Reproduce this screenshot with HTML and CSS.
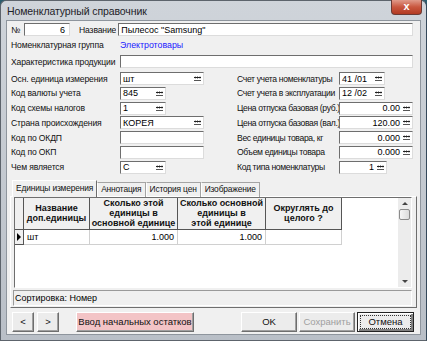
FILE: index.html
```html
<!DOCTYPE html>
<html lang="ru">
<head>
    <meta charset="UTF-8">
    <title>Номенклатурный справочник</title>
    <link rel="stylesheet" href="styles.css">
</head>
<body>
<div class="window">
    <div class="titlebar">
        <span class="title">Номенклатурный справочник</span>
        <span class="close">x</span>
    </div>

    <div class="client">
        <!-- шапка -->
        <div class="row r-first">
            <span class="lbl lbl-num">№</span>
            <span class="field f-num num">6</span>
            <span class="lbl lbl-name">Название</span>
            <span class="field grow">Пылесос "Samsung"</span>
        </div>
        <div class="row r-group">
            <span class="lbl lbl-wide">Номенклатурная группа</span>
            <span class="link">Электротовары</span>
        </div>
        <div class="row r-char">
            <span class="lbl lbl-wide">Характеристика продукции</span>
            <span class="field grow"></span>
        </div>

        <!-- две колонки реквизитов -->
        <div class="cols">
            <div class="col col-left">
                <div class="row"><span class="lbl">Осн. единица измерения</span><span class="field w83">шт<i class="dots"></i></span></div>
                <div class="row"><span class="lbl">Код валюты учета</span><span class="field w45">845<i class="dots"></i></span></div>
                <div class="row"><span class="lbl">Код схемы налогов</span><span class="field w45">1<i class="dots"></i></span></div>
                <div class="row"><span class="lbl">Страна происхождения</span><span class="field w83">КОРЕЯ<i class="dots"></i></span></div>
                <div class="row"><span class="lbl">Код по ОКДП</span><span class="field w83"></span></div>
                <div class="row"><span class="lbl">Код по ОКП</span><span class="field w83"></span></div>
                <div class="row"><span class="lbl">Чем является</span><span class="field w45">С<i class="dots"></i></span></div>
            </div>
            <div class="col col-right">
                <div class="row"><span class="lbl">Счет учета номенклатуры</span><span class="field w45">41 /01<i class="dots"></i></span></div>
                <div class="row"><span class="lbl">Счет учета в эксплуатации</span><span class="field w45">12 /02<i class="dots"></i></span></div>
                <div class="row"><span class="lbl">Цена отпуска базовая (руб.)</span><span class="field w74 num">0.00<i class="dots"></i></span></div>
                <div class="row"><span class="lbl">Цена отпуска базовая (вал.)</span><span class="field w74 num">120.00<i class="dots"></i></span></div>
                <div class="row"><span class="lbl">Вес единицы товара, кг</span><span class="field w74 num">0.000<i class="dots"></i></span></div>
                <div class="row"><span class="lbl">Объем единицы товара</span><span class="field w74 num">0.000<i class="dots"></i></span></div>
                <div class="row"><span class="lbl">Код типа номенклатуры</span><span class="field w48 num">1<i class="dots"></i></span></div>
            </div>
        </div>

        <!-- закладки -->
        <div class="tabs">
            <span class="tab active">Единицы измерения</span>
            <span class="tab">Аннотация</span>
            <span class="tab">История цен</span>
            <span class="tab">Изображение</span>
        </div>
        <div class="panel">
            <div class="grid">
                <table>
                    <tr class="head">
                        <th class="ind"></th>
                        <th class="c1">Название<br>доп.единицы</th>
                        <th class="c2">Сколько этой<br>единицы в<br>основной единице</th>
                        <th class="c3">Сколько основной<br>единицы в<br>этой единице</th>
                        <th class="c4">Округлять до<br>целого ?</th>
                    </tr>
                    <tr class="data">
                        <td class="ind"><i class="arrow"></i></td>
                        <td>шт</td>
                        <td class="num">1.000</td>
                        <td class="num">1.000</td>
                        <td></td>
                    </tr>
                </table>
                <div class="vscroll">
                    <span class="sarrow up"></span>
                    <span class="thumb"></span>
                    <span class="sarrow down"></span>
                </div>
            </div>
            <div class="status">Сортировка: Номер</div>
        </div>

        <!-- кнопки -->
        <div class="buttons">
            <button class="btn b-nav">&lt;</button>
            <button class="btn b-nav">&gt;</button>
            <button class="btn b-init">Ввод начальных остатков</button>
            <button class="btn b-ok">OK</button>
            <button class="btn b-save">Сохранить</button>
            <button class="btn b-cancel"><span>Отмена</span></button>
        </div>
    </div>
</div>
</body>
</html>
```

FILE: styles.css
```css
/* окно в стиле Vista Basic */
body {
    margin: 0;
    background: #2b5d6e;
    font-family: "Liberation Sans", Arial, sans-serif;
    font-size: 9px;
    color: #000;
}

.window {
    width: 427px;
    height: 341px;
    box-sizing: border-box;
    background: linear-gradient(180deg, #cfd4da 0%, #b9bfc7 100%);
    border: 1px solid #5d646c;
    border-right-color: #34485a;
    border-radius: 6px 6px 0 0;
    display: flex;
    flex-direction: column;
}

.titlebar {
    height: 19px;
    flex: none;
    display: flex;
    align-items: flex-start;
    justify-content: space-between;
    padding: 0 4px 0 6px;
}
.title {
    font-size: 10.5px;
    color: #1d2228;
    margin-top: 4px;
    letter-spacing: -0.1px;
}
.close {
    width: 31px;
    height: 15px;
    margin-top: -1px;
    background: linear-gradient(180deg, #e09a8a 0%, #c9573f 50%, #b23a22 100%);
    border: 1px solid #6b3a34;
    border-top: none;
    border-radius: 0 0 4px 4px;
    color: #fff;
    font: bold 11px "Liberation Sans", Arial, sans-serif;
    text-align: center;
    line-height: 13px;
    box-sizing: border-box;
}

/* рабочая область */
.client {
    margin: 0 5px 5px 5px;
    height: 315px;
    background: #f0f0f0;
    border: 1px solid #8e959d;
    box-sizing: border-box;
    padding: 2px 0 0 0;
}

.row {
    display: flex;
    align-items: center;
    height: 13px;
    white-space: nowrap;
}
.lbl {
    display: inline-block;
    color: #111;
    font-size: 8.6px;
    letter-spacing: -0.15px;
    overflow: hidden;
}
.field {
    display: flex;
    align-items: center;
    box-sizing: border-box;
    height: 13px;
    background: #fff;
    border: 1px solid;
    border-color: #6e6e6e #dcdcdc #dcdcdc #6e6e6e;
    padding: 0 2px;
    position: relative;
}
.field.num {
    justify-content: flex-end;
}
.grow { flex: 1; }

.dots {
    display: inline-block;
    width: 7px;
    height: 4px;
    margin-left: auto;
    background: radial-gradient(circle, #222 0.9px, transparent 1.1px) 0 0 / 2.4px 3px repeat-x;
    border-bottom: 1px solid #555;
}
.field.num .dots { margin-left: 3px; }

/* первые строки */
.r-first { margin: 0 7px 0 4px; }
.lbl-num { width: 13px; }
.f-num { width: 46px; justify-content: flex-end; padding-right: 4px; }
.lbl-name { margin: 0 2px 0 9px; }

.r-group { margin: 2px 0 0 4px; }
.lbl-wide { width: 109px; }
.link { color: #1a1aff; font-size: 8.8px; }

.r-char { margin: 4px 7px 0 4px; }

/* колонки */
.cols {
    display: flex;
    margin-top: 4px;
}
.col {
    display: flex;
    flex-direction: column;
    gap: 1.8px;
}
.col-left { width: 230px; padding-left: 4px; box-sizing: border-box; }
.col-left .lbl { width: 109px; }
.col-right .lbl { width: 102px; letter-spacing: -0.35px; }
.w83 { width: 84px; }
.w45 { width: 46px; }
.w74 { width: 74px; }
.w48 { width: 48px; }

/* закладки */
.tabs {
    display: flex;
    margin: 8px 0 0 6px;
    height: 15px;
    align-items: flex-end;
    position: relative;
    z-index: 1;
}
.tab {
    height: 14px;
    line-height: 13px;
    padding: 0 3px;
    border: 1px solid #a4a4a4;
    border-bottom: none;
    border-left-color: #fff;
    color: #111;
    font-size: 8.4px;
    letter-spacing: -0.15px;
}
.tab.active {
    height: 16px;
    line-height: 14px;
    background: #f0f0f0;
    border-color: #fff #6e6e6e #f0f0f0 #fff;
    border-width: 1px 1px 0 1px;
    margin-left: -1px;
}

.panel {
    margin: -1px 3px 0 3px;
    height: 112px;
    box-sizing: border-box;
    border: 1px solid;
    border-color: #fff #6e6e6e #6e6e6e #fff;
    padding: 0 4px 0 2px;
}

/* таблица */
.grid {
    display: flex;
    height: 91px;
    box-sizing: border-box;
    background: #fff;
    border: 1px solid;
    border-color: #6e6e6e #fff #fff #6e6e6e;
    margin-left: 1px;
}
table {
    border-collapse: collapse;
    align-self: flex-start;
    font-size: 9px;
}
th {
    background: #f0f0f0;
    font-weight: bold;
    font-size: 9px;
    line-height: 10px;
    height: 31px;
    padding: 0;
    border-right: 1px solid #555;
    border-bottom: 1px solid #555;
    color: #111;
}
th.ind { width: 8px; }
th.c1 { width: 65px; }
th.c2 { width: 87px; }
th.c3 { width: 87px; }
th.c4 { width: 75px; }
td {
    height: 14px;
    padding: 0 3px;
    border-right: 1px solid #d0d0d0;
    border-bottom: 1px solid #d0d0d0;
}
td.ind {
    padding: 0;
    background: #f0f0f0;
    border-right: 1px solid #555;
    border-bottom: 1px solid #555;
}
td.num { text-align: right; }
.arrow {
    display: block;
    width: 0;
    height: 0;
    margin-left: 2px;
    border-top: 4px solid transparent;
    border-bottom: 4px solid transparent;
    border-left: 4px solid #000;
}

.vscroll {
    margin-left: auto;
    width: 13px;
    background: #ececec;
    display: flex;
    flex-direction: column;
    align-items: center;
    padding: 4px 0;
    box-sizing: border-box;
}
.sarrow {
    width: 0;
    height: 0;
    border-left: 3px solid transparent;
    border-right: 3px solid transparent;
}
.sarrow.up { border-bottom: 3px solid #444; }
.sarrow.down { border-top: 3px solid #444; margin-top: auto; }
.thumb {
    width: 11px;
    height: 11px;
    margin-top: 4px;
    box-sizing: border-box;
    border: 1px solid #8b8b8b;
    border-radius: 2px;
    background: linear-gradient(90deg, #f6f6f6, #dcdcdc);
}

.status {
    margin: 2px 0 0 0;
    height: 16px;
    box-sizing: border-box;
    border: 1px solid;
    border-color: #9a9a9a #fff #fff #9a9a9a;
    line-height: 14px;
    padding-left: 1px;
}

/* кнопки */
.buttons {
    display: flex;
    margin: 4px 0 0 5px;
    height: 20px;
}
.btn {
    font-family: "Liberation Sans", Arial, sans-serif;
    font-size: 9.5px;
    height: 20px;
    padding: 0;
    background: #ececec;
    color: #111;
    border: 1px solid;
    border-color: #fff #6e6e6e #6e6e6e #fff;
    box-shadow: inset -1px -1px 0 #a0a0a0;
}
.b-nav { width: 22px; margin-right: 3px; }
.b-init {
    width: 118px;
    margin-left: 14px;
    background: #f3c4c6;
}
.b-ok { width: 56px; margin-left: 47px; }
.b-save { width: 56px; margin-left: 2px; color: #a0a0a0; }
.b-cancel {
    width: 57px;
    margin-left: 2px;
    border-color: #222;
    box-shadow: inset 1px 1px 0 #fff, inset -2px -2px 0 #808080;
    padding: 2px;
}
.b-cancel span {
    display: block;
    height: 100%;
    line-height: 12px;
    border: 1px dotted #333;
    box-sizing: border-box;
}
```
